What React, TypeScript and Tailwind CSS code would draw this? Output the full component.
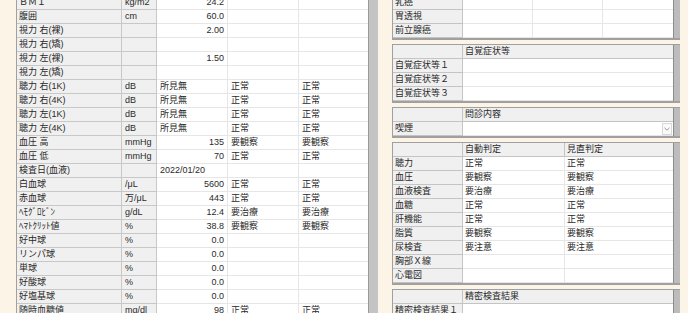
import React from "react";

type LRow = { label: string; unit: string; value: string; num: boolean; j1: string; j2: string };

const leftRows: LRow[] = [
  { label: "ＢＭＩ", unit: "kg/m2", value: "24.2", num: true, j1: "", j2: "" },
  { label: "腹囲", unit: "cm", value: "60.0", num: true, j1: "", j2: "" },
  { label: "視力 右(裸)", unit: "", value: "2.00", num: true, j1: "", j2: "" },
  { label: "視力 右(矯)", unit: "", value: "", num: true, j1: "", j2: "" },
  { label: "視力 左(裸)", unit: "", value: "1.50", num: true, j1: "", j2: "" },
  { label: "視力 左(矯)", unit: "", value: "", num: true, j1: "", j2: "" },
  { label: "聴力 右(1K)", unit: "dB", value: "所見無", num: false, j1: "正常", j2: "正常" },
  { label: "聴力 右(4K)", unit: "dB", value: "所見無", num: false, j1: "正常", j2: "正常" },
  { label: "聴力 左(1K)", unit: "dB", value: "所見無", num: false, j1: "正常", j2: "正常" },
  { label: "聴力 左(4K)", unit: "dB", value: "所見無", num: false, j1: "正常", j2: "正常" },
  { label: "血圧 高", unit: "mmHg", value: "135", num: true, j1: "要観察", j2: "要観察" },
  { label: "血圧 低", unit: "mmHg", value: "70", num: true, j1: "正常", j2: "正常" },
  { label: "検査日(血液)", unit: "", value: "2022/01/20", num: false, j1: "", j2: "" },
  { label: "白血球", unit: "/μL", value: "5600", num: true, j1: "正常", j2: "正常" },
  { label: "赤血球", unit: "万/μL", value: "443", num: true, j1: "正常", j2: "正常" },
  { label: "ﾍﾓｸﾞﾛﾋﾞﾝ", unit: "g/dL", value: "12.4", num: true, j1: "要治療", j2: "要治療" },
  { label: "ﾍﾏﾄｸﾘｯﾄ値", unit: "%", value: "38.8", num: true, j1: "要観察", j2: "要観察" },
  { label: "好中球", unit: "%", value: "0.0", num: true, j1: "", j2: "" },
  { label: "リンパ球", unit: "%", value: "0.0", num: true, j1: "", j2: "" },
  { label: "単球", unit: "%", value: "0.0", num: true, j1: "", j2: "" },
  { label: "好酸球", unit: "%", value: "0.0", num: true, j1: "", j2: "" },
  { label: "好塩基球", unit: "%", value: "0.0", num: true, j1: "", j2: "" },
  { label: "随時血糖値", unit: "mg/dl", value: "98", num: true, j1: "正常", j2: "正常" },
];

const txt = "text-[9px] leading-[13px] text-[#2a2a2a] whitespace-nowrap overflow-hidden";

function LeftTable() {
  return (
    <div className="w-[352px] -mt-[4px] border-l border-[#a0a0a0] bg-white">
      {leftRows.map((r, i) => (
        <div key={i} className="flex h-[14px]">
          <div className={`w-[105px] bg-[#f0f0f0] border-r border-b border-[#c8c8c8] pl-[2px] ${txt}`}>{r.label}</div>
          <div className={`w-[35px] bg-[#f0f0f0] border-r border-b border-[#c8c8c8] pl-[3px] ${txt}`}>{r.unit}</div>
          <div
            className={`w-[71px] border-r border-b border-[#e6e6e6] ${r.num ? "text-right pr-[3px]" : "pl-[3px]"} ${txt}`}
          >
            {r.value}
          </div>
          <div className={`w-[71px] border-r border-b border-[#e6e6e6] pl-[3px] ${txt}`}>{r.j1}</div>
          <div className={`flex-1 border-b border-[#e6e6e6] pl-[3px] ${txt}`}>{r.j2}</div>
        </div>
      ))}
    </div>
  );
}

function Panel({
  cols,
  header,
  rows,
  className,
  select,
}: {
  cols: number[];
  header?: string[];
  rows: string[][];
  className?: string;
  select?: boolean;
}) {
  return (
    <div className={`flex w-[288px] border-l border-t border-b-2 border-[#a0a0a0] ${className ?? ""}`}>
      <div className="w-[280px] bg-white">
        {header && (
          <div className="flex h-[14px] bg-[#f0f0f0]">
            <div className={`w-[70px] border-r border-b border-[#c4c4c4] ${txt}`}></div>
            {cols.map((w, ci) => (
              <div
                key={ci}
                style={{ width: w }}
                className={`${ci < cols.length - 1 ? "border-r" : ""} border-b border-[#c4c4c4] pl-[2px] ${txt}`}
              >
                {header[ci] ?? ""}
              </div>
            ))}
          </div>
        )}
        {rows.map((r, ri) => (
          <div key={ri} className="flex h-[14px]">
            <div className={`w-[70px] bg-[#f0f0f0] border-r border-b border-[#c4c4c4] pl-[2px] ${txt}`}>{r[0]}</div>
            {select ? (
              <div className="flex-1 flex items-center justify-end border-b border-[#e6e6e6] pr-[1px]">
                <div className="w-[10px] h-[12px] border border-[#d8d8d8] bg-[#fafafa] flex items-center justify-center">
                  <svg width="6" height="4" viewBox="0 0 6 4">
                    <path d="M0.5 0.8 L3 3.2 L5.5 0.8" fill="none" stroke="#8a8a8a" strokeWidth="0.9" />
                  </svg>
                </div>
              </div>
            ) : (
              cols.map((w, ci) => (
                <div
                  key={ci}
                  style={{ width: w }}
                  className={`${ci < cols.length - 1 ? "border-r" : ""} border-b border-[#e6e6e6] pl-[2px] ${txt}`}
                >
                  {r[ci + 1] ?? ""}
                </div>
              ))
            )}
          </div>
        ))}
      </div>
      <div className="w-[7px] bg-[#bcbcbc] border-l border-[#8c8c8c]"></div>
    </div>
  );
}

export default function App() {
  return (
    <div className="w-[688px] h-[313px] overflow-hidden bg-[#fcf4e6] flex font-['Liberation_Sans','Noto_Sans_CJK_JP',sans-serif]">
      <div className="w-[16px] shrink-0"></div>
      <LeftTable />
      <div className="w-[10px] shrink-0 bg-[#c4c4c4] border-l border-[#9a9a9a]"></div>
      <div className="w-[14px] shrink-0"></div>
      <div className="flex flex-col w-[288px] -mt-[5px] gap-[4px]">
        <Panel cols={[70, 70, 70]} rows={[["乳癌"], ["胃透視"], ["前立腺癌"]]} />
        <Panel
          cols={[210]}
          header={["自覚症状等"]}
          rows={[["自覚症状等１"], ["自覚症状等２"], ["自覚症状等３"]]}
        />
        <Panel cols={[210]} header={["問診内容"]} rows={[["喫煙"]]} select />
        <Panel
          cols={[102, 108]}
          header={["自動判定", "見直判定"]}
          rows={[
            ["聴力", "正常", "正常"],
            ["血圧", "要観察", "要観察"],
            ["血液検査", "要治療", "要治療"],
            ["血糖", "正常", "正常"],
            ["肝機能", "正常", "正常"],
            ["脂質", "要観察", "要観察"],
            ["尿検査", "要注意", "要注意"],
            ["胸部Ｘ線", "", ""],
            ["心電図", "", ""],
          ]}
        />
        <Panel
          cols={[210]}
          header={["精密検査結果"]}
          rows={[["精密検査結果１"], ["精密検査結果２"], ["精密検査結果３"]]}
        />
      </div>
      <div className="w-[8px] shrink-0"></div>
    </div>
  );
}
